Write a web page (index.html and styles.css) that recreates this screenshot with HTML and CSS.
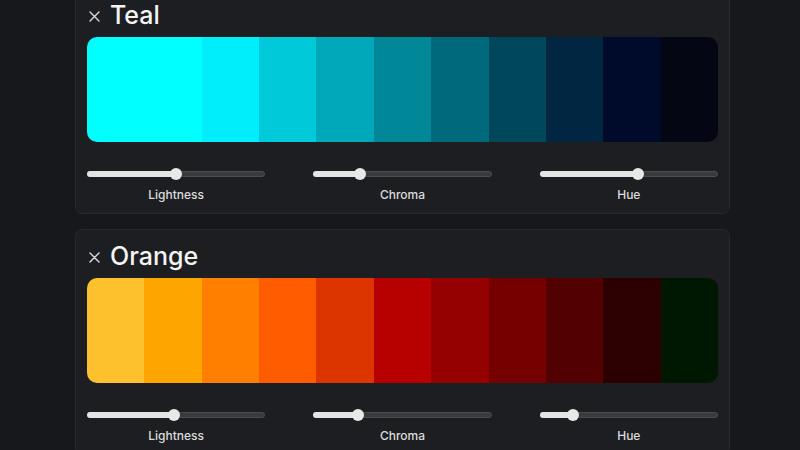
FILE: index.html
```html
<!DOCTYPE html>
<html>
<head>
<meta charset="utf-8">
<link rel="stylesheet" href="styles.css">
</head>
<body>
<main class="list">
  <section class="card card-first">
    <header class="title"><svg class="close" width="11" height="11" viewBox="0 0 11 11" aria-label="remove"><path d="M1 1L10 10M10 1L1 10"/></svg><h2>Teal</h2></header>
    <div class="swatches">
      <div class="sw" style="background:#00ffff"></div>
      <div class="sw" style="background:#00ffff"></div>
      <div class="sw" style="background:#00eefb"></div>
      <div class="sw" style="background:#00c9d9"></div>
      <div class="sw" style="background:#00a9b9"></div>
      <div class="sw" style="background:#008898"></div>
      <div class="sw" style="background:#00697c"></div>
      <div class="sw" style="background:#00475c"></div>
      <div class="sw" style="background:#002642"></div>
      <div class="sw" style="background:#000a2a"></div>
      <div class="sw" style="background:#040713"></div>
    </div>
    <div class="controls">
      <div class="ctl"><div class="track"><div class="fill" style="width:50%"></div><div class="thumb" style="left:50%"></div></div><span class="label">Lightness</span></div>
      <div class="ctl"><div class="track"><div class="fill" style="width:26%"></div><div class="thumb" style="left:26%"></div></div><span class="label">Chroma</span></div>
      <div class="ctl"><div class="track"><div class="fill" style="width:55%"></div><div class="thumb" style="left:55%"></div></div><span class="label">Hue</span></div>
    </div>
  </section>
  <section class="card">
    <header class="title"><svg class="close" width="11" height="11" viewBox="0 0 11 11" aria-label="remove"><path d="M1 1L10 10M10 1L1 10"/></svg><h2>Orange</h2></header>
    <div class="swatches">
      <div class="sw" style="background:#fdc12e"></div>
      <div class="sw" style="background:#ffa500"></div>
      <div class="sw" style="background:#ff8000"></div>
      <div class="sw" style="background:#ff5c00"></div>
      <div class="sw" style="background:#dd3500"></div>
      <div class="sw" style="background:#b70000"></div>
      <div class="sw" style="background:#950000"></div>
      <div class="sw" style="background:#740000"></div>
      <div class="sw" style="background:#520000"></div>
      <div class="sw" style="background:#2d0000"></div>
      <div class="sw" style="background:#001702"></div>
    </div>
    <div class="controls">
      <div class="ctl"><div class="track"><div class="fill" style="width:49%"></div><div class="thumb" style="left:49%"></div></div><span class="label">Lightness</span></div>
      <div class="ctl"><div class="track"><div class="fill" style="width:25%"></div><div class="thumb" style="left:25%"></div></div><span class="label">Chroma</span></div>
      <div class="ctl"><div class="track"><div class="fill" style="width:18.5%"></div><div class="thumb" style="left:18.5%"></div></div><span class="label">Hue</span></div>
    </div>
  </section>
</main>
</body>
</html>
```
FILE: styles.css
```css
html, body {
  margin: 0;
  padding: 0;
  background: #17181b;
  font-family: Inter, "Noto Sans", "Liberation Sans", sans-serif;
  color: #f2f2f2;
  overflow: hidden;
}

.list {
  display: flex;
  flex-direction: column;
  gap: 15px;
  width: 655px;
  margin-left: 75px;
}

.card {
  box-sizing: border-box;
  background: #1d1e21;
  border: 1px solid #27282b;
  border-radius: 7px;
  padding: 11px 11px 10px 11px;
}

.card-first {
  margin-top: -12px;
}

.title {
  display: flex;
  align-items: center;
  height: 30px;
  gap: 10px;
  padding-left: 2px;
}

.close {
  flex: none;
  margin-top: 3px;
  stroke: #dcdcdc;
  stroke-width: 1.4;
  stroke-linecap: round;
  fill: none;
}

.title h2 {
  margin: 0;
  font-size: 25px;
  font-weight: 500;
  line-height: 30px;
  color: #f4f4f4;
}

.swatches {
  display: flex;
  height: 105px;
  margin-top: 7px;
  border-radius: 10px;
  overflow: hidden;
}

.sw {
  flex: 1;
}

.controls {
  display: grid;
  grid-template-columns: repeat(3, 1fr);
  column-gap: 48px;
  margin-top: 26px;
}

.ctl {
  display: flex;
  flex-direction: column;
  align-items: center;
}

.track {
  position: relative;
  box-sizing: border-box;
  width: 100%;
  height: 6px;
  margin: 3px 0;
  border-radius: 3px;
  background: #393a3b;
  border: 1px solid #4a4b4c;
}

.fill {
  position: absolute;
  left: -1px;
  top: -1px;
  bottom: -1px;
  border-radius: 3px;
  background: #e4e4e4;
}

.thumb {
  position: absolute;
  top: 50%;
  width: 12px;
  height: 12px;
  margin-left: -6px;
  margin-top: -6px;
  border-radius: 50%;
  background: #e8e8e8;
}

.label {
  margin-top: 7px;
  font-size: 12px;
  line-height: 16px;
  font-weight: 500;
  color: #dcdcdc;
}
```
